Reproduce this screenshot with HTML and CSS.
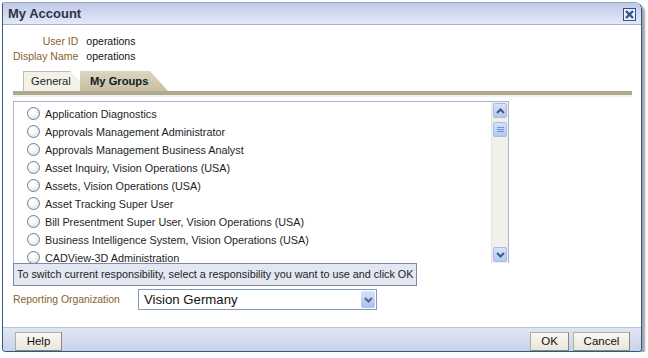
FILE: index.html
```html
<!DOCTYPE html>
<html>
<head>
<meta charset="utf-8">
<title>My Account</title>
<link rel="stylesheet" href="styles.css">
</head>
<body>
	<div class="dialog">
		<div class="titlebar">
			<span class="title">My Account</span>
			<span class="close">
				<svg width="13" height="13" viewBox="0 0 13 13">
					<rect x="0.5" y="0.5" width="12" height="12" fill="#e9eef8" stroke="#2d5587"/>
					<path d="M3 3 L10 10 M10 3 L3 10" stroke="#2d5587" stroke-width="2.4"/>
				</svg>
			</span>
		</div>

		<div class="content">
			<div class="info">
				<span class="lbl">User ID</span><span class="val">operations</span>
				<span class="lbl">Display Name</span><span class="val">operations</span>
			</div>

			<div class="tabs">
				<div class="tab tab-general">General</div>
				<div class="tab tab-active">My Groups</div>
			</div>
			<div class="tab-line"></div>

			<div class="listbox">
				<ul class="groups">
					<li><span class="radio"></span>Application Diagnostics</li>
					<li><span class="radio"></span>Approvals Management Administrator</li>
					<li><span class="radio"></span>Approvals Management Business Analyst</li>
					<li><span class="radio"></span>Asset Inquiry, Vision Operations (USA)</li>
					<li><span class="radio"></span>Assets, Vision Operations (USA)</li>
					<li><span class="radio"></span>Asset Tracking Super User</li>
					<li><span class="radio"></span>Bill Presentment Super User, Vision Operations (USA)</li>
					<li><span class="radio"></span>Business Intelligence System, Vision Operations (USA)</li>
					<li><span class="radio"></span>CADView-3D Administration</li>
				</ul>
				<div class="scrollbar">
					<span class="sb-btn">
						<svg width="9" height="6" viewBox="0 0 9 6"><path d="M1 5 L4.5 1.5 L8 5" fill="none" stroke="#40577e" stroke-width="2"/></svg>
					</span>
					<span class="sb-thumb">
						<svg width="7" height="7" viewBox="0 0 7 7"><path d="M0 1.5 H7 M0 3.5 H7 M0 5.5 H7" stroke="#6f8fd0" stroke-width="1"/></svg>
					</span>
					<span class="sb-track"></span>
					<span class="sb-btn">
						<svg width="9" height="6" viewBox="0 0 9 6"><path d="M1 1 L4.5 4.5 L8 1" fill="none" stroke="#40577e" stroke-width="2"/></svg>
					</span>
				</div>
			</div>

			<div class="hint">To switch current responsibility, select a responsibility you want to use and click OK</div>

			<div class="org-row">
				<span class="org-lbl">Reporting Organization</span>
				<div class="select">
					<span class="select-text">Vision Germany</span>
					<span class="select-btn">
						<svg width="9" height="6" viewBox="0 0 9 6"><path d="M1 1 L4.5 4.5 L8 1" fill="none" stroke="#4f6486" stroke-width="2"/></svg>
					</span>
				</div>
			</div>
		</div>

		<div class="footer">
			<button class="btn">Help</button>
			<span class="spacer"></span>
			<button class="btn btn-ok">OK</button>
			<button class="btn btn-cancel">Cancel</button>
		</div>
	</div>
</body>
</html>
```

FILE: styles.css
```css
*{
	padding: 0;
	margin: 0;
	box-sizing: border-box;
}
body{
	background: #fff;
	font-family: "Liberation Sans", Arial, sans-serif;
	font-size: 10.8px;
	color: #1e1e1e;
}
.dialog{
	display: flex;
	flex-direction: column;
	width: 640px;
	height: 350px;
	margin: 2px 0 0 2px;
	border: 1px solid #2f5889;
	border-top-color: #9aa6bf;
	border-radius: 2px 7px 4px 4px;
	background: #fff;
	box-shadow: 3px 3px 2px #a3a3a3;
	overflow: hidden;
}

/* title */
.titlebar{
	display: flex;
	align-items: center;
	height: 22px;
	padding: 0 5px 0 5px;
	background: linear-gradient(#bfc9e8, #e6eaf6);
	border-bottom: 1px solid #9fb0d3;
}
.title{
	flex: 1;
	font-size: 13px;
	font-weight: bold;
	color: #2c3347;
}
.close{
	display: flex;
	margin-top: 1px;
}

.content{
	flex: 1;
	padding: 9px 9px 0 10px;
}

/* user info */
.info{
	display: grid;
	grid-template-columns: auto auto;
	justify-content: start;
	column-gap: 8px;
	line-height: 15px;
	font-size: 10.5px;
}
.lbl{
	text-align: right;
	color: #86642c;
}
.val{
	color: #141414;
}

/* tabs */
.tabs{
	display: flex;
	margin: 7px 0 0 10px;
	height: 20px;
}
.tab{
	display: flex;
	align-items: center;
	height: 20px;
	font-size: 11.2px;
}
.tab-general{
	width: 57px;
	padding-left: 8px;
	background: #f3f1e9;
	box-shadow: inset 1px 1px 0 #c4bda7;
	clip-path: polygon(0 0, 47px 0, 57px 10px, 57px 100%, 0 100%);
}
.tab-active{
	width: 88px;
	padding-left: 10px;
	font-weight: bold;
	color: #101a2a;
	background: linear-gradient(#ddd6c0, #c8bfa3);
	clip-path: polygon(0 0, 70px 0, 88px 100%, 0 100%);
}
.tab-line{
	height: 4px;
	background: #b2a88c;
	box-shadow: 0 2px 0 #eef1f8;
}

/* group list */
.listbox{
	display: flex;
	width: 496px;
	height: 162px;
	margin-top: 6px;
	border: 1px solid #a9b5d2;
	border-bottom: 0;
	overflow: hidden;
}
.groups{
	flex: 1;
	list-style: none;
	padding: 3px 0 0 13px;
}
.groups li{
	display: flex;
	align-items: center;
	gap: 5px;
	height: 18px;
	white-space: nowrap;
}
.radio{
	width: 13px;
	height: 13px;
	margin-top: -2px;
	border: 1px solid #6d7f96;
	border-radius: 50%;
	background: radial-gradient(circle at 40% 35%, #ffffff 20%, #dfe2e8 80%, #c4c9d3);
}
.scrollbar{
	display: flex;
	flex-direction: column;
	width: 17px;
	padding: 1px;
	background: #f1f0eb;
	border-left: 1px solid #e6e4dc;
}
.sb-btn, .sb-thumb{
	display: flex;
	align-items: center;
	justify-content: center;
	height: 15px;
	border: 1px solid #a5bbe6;
	border-radius: 2px;
	background: linear-gradient(#d5e2fb, #b3c9f3);
}
.sb-thumb{
	margin-top: 4px;
}
.sb-track{
	flex: 1;
}

/* hint */
.hint{
	width: fit-content;
	padding: 4px 3px 5px 3px;
	background: #e3e7f2;
	border: 1px solid #7d8aa6;
	white-space: nowrap;
}

/* reporting organization */
.org-row{
	display: flex;
	align-items: center;
	margin-top: 3px;
}
.org-lbl{
	width: 125px;
	color: #86642c;
	font-size: 10.4px;
}
.select{
	display: flex;
	align-items: center;
	width: 239px;
	height: 21px;
	padding: 0 1px 0 5px;
	border: 1px solid #7f9bc0;
}
.select-text{
	flex: 1;
	font-size: 13.2px;
	color: #111;
}
.select-btn{
	display: flex;
	align-items: center;
	justify-content: center;
	width: 14px;
	height: 17px;
	border-radius: 2px;
	background: linear-gradient(#d8e3fa, #aac0ee);
}

/* footer */
.footer{
	display: flex;
	align-items: center;
	gap: 4px;
	height: 24px;
	padding: 3px 11px 0 12px;
	background: linear-gradient(#e1e6f3, #c8d2ea);
	border-top: 1px solid #b7c3de;
}
.spacer{
	flex: 1;
}
.btn{
	height: 19px;
	font-family: "Liberation Sans", Arial, sans-serif;
	font-size: 11.5px;
	color: #111;
	background: linear-gradient(#faf9f4, #e8e5d8);
	border: 1px solid #b2ad9c;
	border-right-color: #8d8877;
	border-bottom-color: #8d8877;
}
.footer .btn:first-child{
	width: 47px;
}
.btn-ok{
	width: 39px;
}
.btn-cancel{
	width: 57px;
}
```
